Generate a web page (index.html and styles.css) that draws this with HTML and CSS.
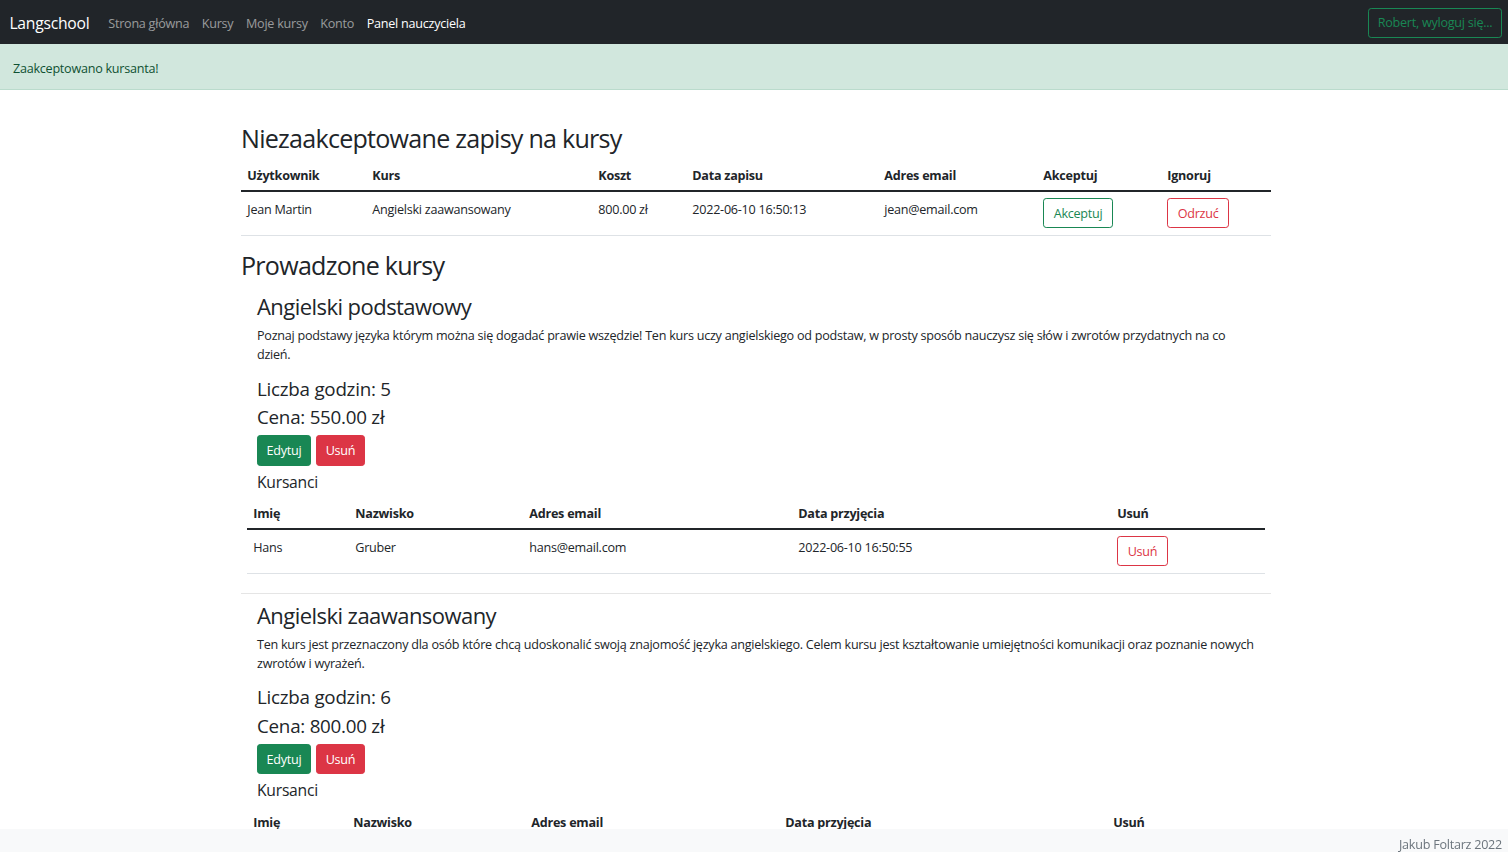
FILE: index.html
```html
<!DOCTYPE html>
<html lang="pl">
<head>
<meta charset="utf-8">
<title>Langschool - Panel nauczyciela</title>
<link rel="stylesheet" href="styles.css">
</head>
<body>
<nav class="navbar">
  <div class="nav-left">
    <a class="brand" href="#">Langschool</a>
    <ul class="nav-links">
      <li><a href="#">Strona główna</a></li>
      <li><a href="#">Kursy</a></li>
      <li><a href="#">Moje kursy</a></li>
      <li><a href="#">Konto</a></li>
      <li><a class="active" href="#">Panel nauczyciela</a></li>
    </ul>
  </div>
  <button class="btn btn-outline-success btn-logout">Robert, wyloguj się...</button>
</nav>
<div class="alert">Zaakceptowano kursanta!</div>

<main class="container">
  <h2>Niezaakceptowane zapisy na kursy</h2>
  <table class="table pending">
    <thead>
      <tr><th>Użytkownik</th><th>Kurs</th><th>Koszt</th><th>Data zapisu</th><th>Adres email</th><th>Akceptuj</th><th>Ignoruj</th></tr>
    </thead>
    <tbody>
      <tr>
        <td>Jean Martin</td><td>Angielski zaawansowany</td><td>800.00 zł</td><td>2022-06-10 16:50:13</td><td>jean@email.com</td>
        <td><button class="btn btn-outline-success">Akceptuj</button></td>
        <td><button class="btn btn-outline-danger">Odrzuć</button></td>
      </tr>
    </tbody>
  </table>

  <h2>Prowadzone kursy</h2>
  <div class="courses">
    <section class="course">
      <div class="course-info">
        <h3>Angielski podstawowy</h3>
        <p>Poznaj podstawy języka którym można się dogadać prawie wszędzie! Ten kurs uczy angielskiego od podstaw, w prosty sposób nauczysz się słów i zwrotów przydatnych na co dzień.</p>
        <h4>Liczba godzin: 5</h4>
        <h4>Cena: 550.00 zł</h4>
        <div class="actions">
          <button class="btn btn-success">Edytuj</button>
          <button class="btn btn-danger">Usuń</button>
        </div>
        <h5>Kursanci</h5>
      </div>
      <table class="table students s1">
        <thead>
          <tr><th>Imię</th><th>Nazwisko</th><th>Adres email</th><th>Data przyjęcia</th><th>Usuń</th></tr>
        </thead>
        <tbody>
          <tr><td>Hans</td><td>Gruber</td><td>hans@email.com</td><td>2022-06-10 16:50:55</td><td><button class="btn btn-outline-danger">Usuń</button></td></tr>
        </tbody>
      </table>
    </section>
    <hr>
    <section class="course">
      <div class="course-info">
        <h3>Angielski zaawansowany</h3>
        <p>Ten kurs jest przeznaczony dla osób które chcą udoskonalić swoją znajomość języka angielskiego. Celem kursu jest kształtowanie umiejętności komunikacji oraz poznanie nowych zwrotów i wyrażeń.</p>
        <h4>Liczba godzin: 6</h4>
        <h4>Cena: 800.00 zł</h4>
        <div class="actions">
          <button class="btn btn-success">Edytuj</button>
          <button class="btn btn-danger">Usuń</button>
        </div>
        <h5>Kursanci</h5>
      </div>
      <table class="table students s2">
        <thead>
          <tr><th>Imię</th><th>Nazwisko</th><th>Adres email</th><th>Data przyjęcia</th><th>Usuń</th></tr>
        </thead>
        <tbody>
          <tr><td>&nbsp;</td><td></td><td></td><td></td><td></td></tr>
        </tbody>
      </table>
    </section>
  </div>
</main>

<footer class="footer">Jakub Foltarz 2022</footer>
</body>
</html>
```

FILE: styles.css
```css
* { box-sizing: border-box; }

html, body {
  margin: 0;
  padding: 0;
}

body {
  font-family: "Open Sans", "Noto Sans", sans-serif;
  font-size: 12.6px;
  line-height: 1.5;
  letter-spacing: -0.02em;
  color: #212529;
  background: #fff;
  padding-bottom: 40px;
}

a { text-decoration: none; }

/* Navbar */
.navbar {
  background: #212529;
  height: 44px;
  display: flex;
  align-items: center;
  justify-content: space-between;
  padding: 0 6px 0 9.4px;
}

.nav-left {
  display: flex;
  align-items: center;
  padding-top: 4px;
}

.brand {
  color: #fff;
  font-size: 15.7px;
  margin-right: 12.6px;
  line-height: 1.5;
}

.nav-links {
  list-style: none;
  margin: 0;
  padding: 0;
  display: flex;
}

.nav-links a {
  display: block;
  padding: 6.3px;
  color: rgba(255, 255, 255, 0.55);
}

.nav-links a.active { color: #fff; }

/* Buttons */
.btn {
  display: inline-block;
  font-family: inherit;
  font-size: 12.6px;
  letter-spacing: inherit;
  line-height: 1.5;
  padding: 6px 9.4px 3.4px;
  border: 1px solid transparent;
  border-radius: 3.2px;
  background: transparent;
  cursor: pointer;
}

.btn-outline-success { color: #198754; border-color: #198754; }
.btn-outline-danger { color: #dc3545; border-color: #dc3545; }
.btn-success { color: #fff; background: #198754; border-color: #198754; }
.btn-danger { color: #fff; background: #dc3545; border-color: #dc3545; }

.btn-logout { height: 30px; margin-top: 1px; padding: 5px 8.6px 3.4px; }

/* Alert */
.alert {
  background: #d1e7dd;
  color: #0f5132;
  border-bottom: 1px solid #badbcc;
  padding: 16px 13px 9px;
  height: 46px;
}

/* Content */
.container {
  width: 1030px;
  margin: 0 auto 0 241px;
  padding-top: 33px;
}

h2, h3, h4, h5 {
  font-weight: 400;
  line-height: 1.2;
  margin: 0 0 6.3px;
}

h2 { font-size: 25.1px; letter-spacing: -0.03em; }
h3 { font-size: 22px; margin-bottom: 8px; letter-spacing: -0.025em; }
h4 { font-size: 18.8px; }
h5 { font-size: 15.7px; margin-bottom: 6px; }

p { margin: 0 0 12.6px; }

.table {
  width: 100%;
  border-collapse: collapse;
  margin-bottom: 14.6px;
  table-layout: fixed;
}

.table th, .table td {
  text-align: left;
  padding: 7.3px 6.3px 4.3px;
  vertical-align: top;
  border-bottom: 1px solid #dee2e6;
}

.table td { padding-top: 9.3px; padding-bottom: 6.3px; }

.table td .btn { margin-top: -3px; }

.table th { font-weight: 700; }

.table thead th { border-bottom: 2px solid #212529; }

.pending th:nth-child(1) { width: 125px; }
.pending th:nth-child(2) { width: 226px; }
.pending th:nth-child(3) { width: 94px; }
.pending th:nth-child(4) { width: 192px; }
.pending th:nth-child(5) { width: 159px; }
.pending th:nth-child(6) { width: 124px; }

.courses { padding: 6px 6px 0; }

.course-info { padding: 0 10px; }

.actions { margin-bottom: 7px; display: flex; gap: 5px; }

.actions .btn { padding-left: 8.6px; padding-right: 8.6px; }

.students { margin-bottom: 0; }

.s1 th:nth-child(1) { width: 102px; }
.s1 th:nth-child(2) { width: 174px; }
.s1 th:nth-child(3) { width: 269px; }
.s1 th:nth-child(4) { width: 319px; }

.s2 th:nth-child(1) { width: 100px; }
.s2 th:nth-child(2) { width: 178px; }
.s2 th:nth-child(3) { width: 254px; }
.s2 th:nth-child(4) { width: 328px; }

hr {
  border: 0;
  border-top: 1px solid rgba(0, 0, 0, 0.1);
  margin: 19px -6px 8px;
}

/* Footer */
.footer {
  position: fixed;
  left: 0;
  right: 0;
  bottom: 0;
  height: 23px;
  background: #f8f9fa;
  color: #6c757d;
  text-align: right;
  padding: 6px 6px 0 0;
  line-height: 19px;
}
```
